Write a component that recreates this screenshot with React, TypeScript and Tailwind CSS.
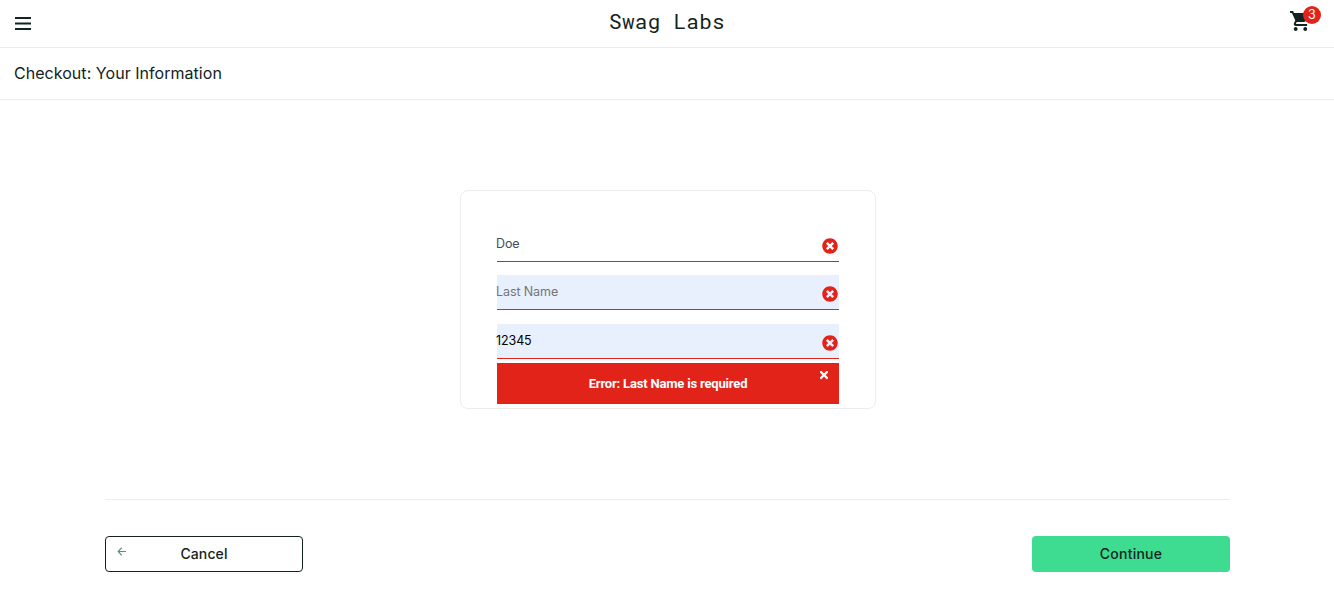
import React from "react";
import { FaTimes, FaTimesCircle } from "react-icons/fa";

const Field = ({ value, placeholder, filled, className }: { value?: string; placeholder: string; filled?: boolean; className: string }) => (
  <div className={`flex h-[35px] items-center justify-between border-b border-[#e2231a] pr-px ${filled ? "bg-[#e8f0fe]" : "bg-white"} ${className}`}>
    <span className="-ml-px pt-px">{value ?? placeholder}</span>
    <FaTimesCircle size={16} className="mt-1 text-[#e2231a]" />
  </div>
);

export default function App() {
  return (
    <div className="flex h-[613px] w-full flex-col overflow-hidden bg-white font-['Inter',sans-serif] text-[#132322]">
      <header className="flex h-12 shrink-0 items-start justify-between border-b border-[#ededed] pr-[13px] pl-[15px]">
        <button className="flex w-[96px] pt-[17px]" aria-label="Open Menu">
          <svg width="16" height="13" viewBox="0 0 16 13" fill="#132322">
            <rect width="16" height="2" />
            <rect y="5.5" width="16" height="2" />
            <rect y="11" width="16" height="2" />
          </svg>
        </button>
        <div className="pt-[5px] pr-[2px] font-['Roboto_Mono','Liberation_Mono',monospace] text-[21px] leading-8 tracking-[0.28px]">Swag Labs</div>
        <button className="relative h-12 w-[96px]" aria-label="Cart">
          <svg className="absolute top-[11px] right-[11px]" width="20" height="20" viewBox="1 2 21 20" preserveAspectRatio="none" fill="#132322">
            <path d="M7 18c-1.1 0-1.99.9-1.99 2S5.9 22 7 22s2-.9 2-2-.9-2-2-2zM1 2v2h2l3.6 7.59-1.35 2.45c-.16.28-.25.61-.25.96 0 1.1.9 2 2 2h12v-2H7.42c-.14 0-.25-.11-.25-.25l.03-.12.9-1.63h7.45c.75 0 1.41-.41 1.75-1.03l3.58-6.49A1 1 0 0 0 20 4H5.21l-.94-2H1zm16 16c-1.1 0-1.99.9-1.99 2s.89 2 1.99 2 2-.9 2-2-.9-2-2-2z" />
          </svg>
          <span className="absolute top-[6px] right-0 flex h-[18px] w-[18px] items-center justify-center rounded-full bg-[#e2231a] text-[12.5px] text-white">3</span>
        </button>
      </header>
      <div className="flex h-[52px] shrink-0 items-center border-b border-[#ededed] pb-0.5 pl-[14px]">
        <h1 className="text-[16px] tracking-[0.04px]">Checkout: Your Information</h1>
      </div>
      <main className="flex flex-col pt-[90px]">
        <section className="ml-[460px] flex h-[219px] w-[416px] flex-col rounded-lg border border-[#ededed] px-9 pt-9 text-[12.5px] tracking-[-0.1px]">
          <Field value="Doe" placeholder="First Name" className="text-[#484c55]" />
          <Field placeholder="Last Name" filled className="mt-[13px] text-[#757575]" />
          <Field value="12345" placeholder="Zip/Postal Code" filled className="mt-[14px] text-black" />
          <div className="relative mt-1 flex h-[41px] items-center justify-center bg-[#e2231a] font-['Roboto',sans-serif] text-[13px] font-bold tracking-[-0.18px] text-white">
            <span>Error: Last Name is required</span>
            <FaTimes size={12} className="absolute top-[6px] right-[9px]" />
          </div>
        </section>
        <footer className="mr-[104px] ml-[105px] mt-[90px] flex justify-between border-t border-[#ededed] pt-9 text-[14px] font-medium">
          <button className="relative flex h-9 w-[198px] items-center justify-center rounded border border-[#132322] pb-0.5 tracking-[0.1px]">
            <svg className="absolute top-[10px] left-[11px]" width="10" height="9" viewBox="0 0 10 9" fill="none" stroke="#5c8f7d" strokeWidth="1.2">
              <path d="M4.7 .7 1.2 4.5l3.5 3.8M1.2 4.5H9" />
            </svg>
            <span>Cancel</span>
          </button>
          <button className="flex h-9 w-[198px] items-center justify-center rounded bg-[#3ddc91] pb-0.5 tracking-[0.25px]">
            <span>Continue</span>
          </button>
        </footer>
      </main>
    </div>
  );
}
